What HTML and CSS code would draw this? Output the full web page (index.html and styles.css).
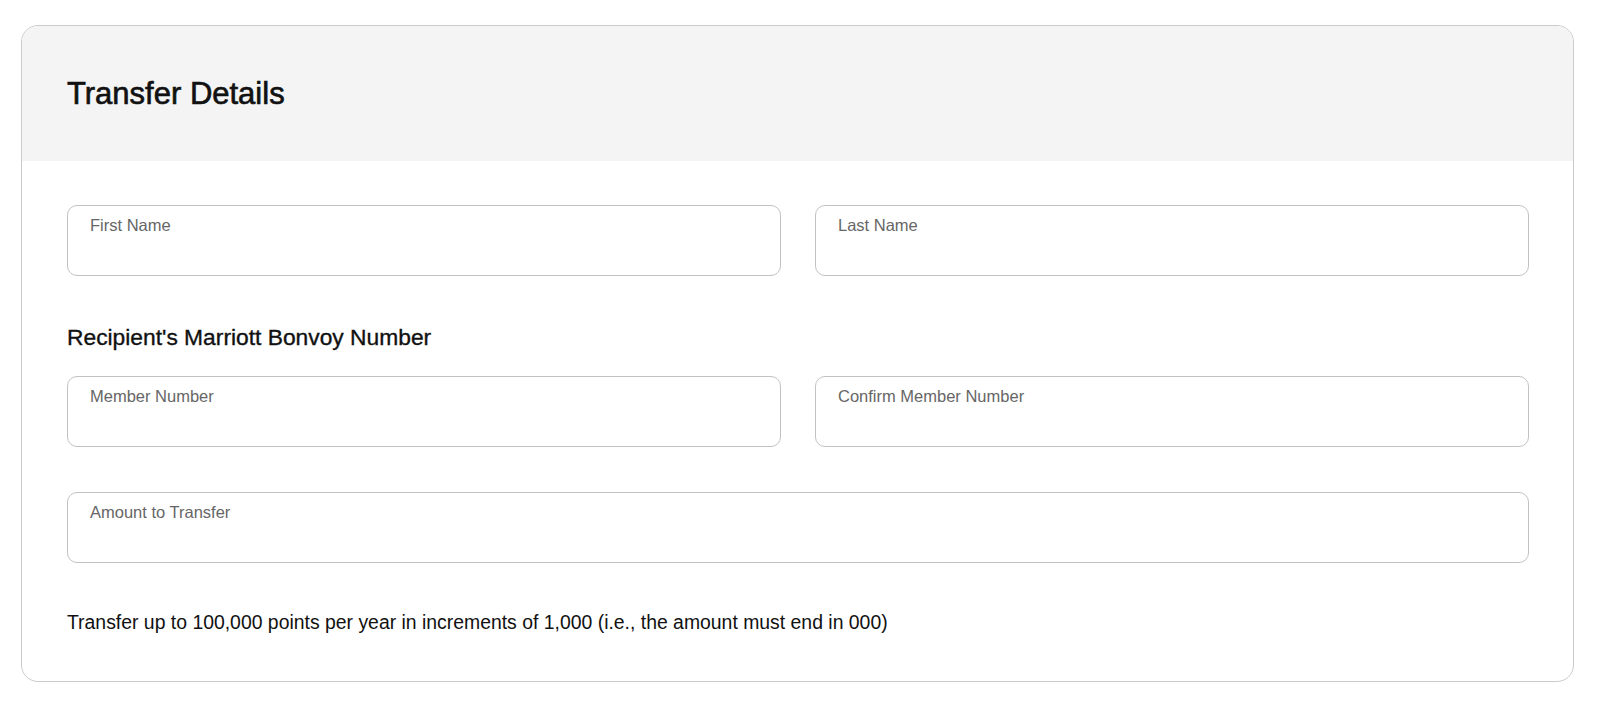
FILE: index.html
```html
<!DOCTYPE html>
<html lang="en">
<head>
<meta charset="utf-8">
<title>Transfer Details</title>
<link rel="stylesheet" href="styles.css">
</head>
<body>
<div class="page">
  <section class="card">
    <header class="card-header">
      <h1 class="card-title">Transfer Details</h1>
    </header>
    <div class="card-body">
      <div class="row two">
        <label class="field"><span class="field-label">First Name</span><input class="field-input" type="text"></label>
        <label class="field"><span class="field-label">Last Name</span><input class="field-input" type="text"></label>
      </div>
      <h2 class="section-title">Recipient's Marriott Bonvoy Number</h2>
      <div class="row two">
        <label class="field"><span class="field-label">Member Number</span><input class="field-input" type="text"></label>
        <label class="field"><span class="field-label">Confirm Member Number</span><input class="field-input" type="text"></label>
      </div>
      <div class="row one">
        <label class="field"><span class="field-label">Amount to Transfer</span><input class="field-input" type="text"></label>
      </div>
      <p class="note">Transfer up to 100,000 points per year in increments of 1,000 (i.e., the amount must end in 000)</p>
    </div>
  </section>
</div>
</body>
</html>
```

FILE: styles.css
```css
* { box-sizing: border-box; }
html, body { margin: 0; padding: 0; background: #fff; }
body {
  font-family: "Liberation Sans", Arial, Helvetica, sans-serif;
  color: #111;
}
.page {
  padding: 25px 0 0 21px;
}
.card {
  width: 1553px;
  border: 1px solid #cbcbcb;
  border-radius: 17px;
  overflow: hidden;
  background: #fff;
}
.card-header {
  height: 135px;
  background: #f4f4f4;
  display: flex;
  align-items: center;
  padding: 0 45px;
}
.card-title {
  margin: 0;
  font-size: 31px;
  line-height: 36px;
  font-weight: 400;
  -webkit-text-stroke: 0.65px #111;
  color: #111;
}
.card-body {
  padding: 44px 44px 47px 45px;
}
.row {
  display: grid;
  column-gap: 34px;
}
.row.two { grid-template-columns: 1fr 1fr; }
.row.one { grid-template-columns: 1fr; margin-top: 45px; }
.field {
  position: relative;
  display: block;
  height: 71px;
  border: 1px solid #c2c2c2;
  border-radius: 10px;
  background: #fff;
}
.field-label {
  position: absolute;
  left: 22px;
  top: 9px;
  font-size: 16.5px;
  line-height: 20px;
  color: #666;
}
.field-input {
  position: absolute;
  left: 22px;
  right: 22px;
  bottom: 10px;
  height: 24px;
  border: 0;
  outline: 0;
  background: transparent;
  font: inherit;
  font-size: 16.5px;
}
.section-title {
  margin: 47px 0 25px;
  font-size: 22.8px;
  line-height: 28px;
  font-weight: 400;
  -webkit-text-stroke: 0.35px #111;
  color: #111;
}
.note {
  margin: 47px 0 0;
  font-size: 19.4px;
  line-height: 24px;
  color: #111;
}
```
